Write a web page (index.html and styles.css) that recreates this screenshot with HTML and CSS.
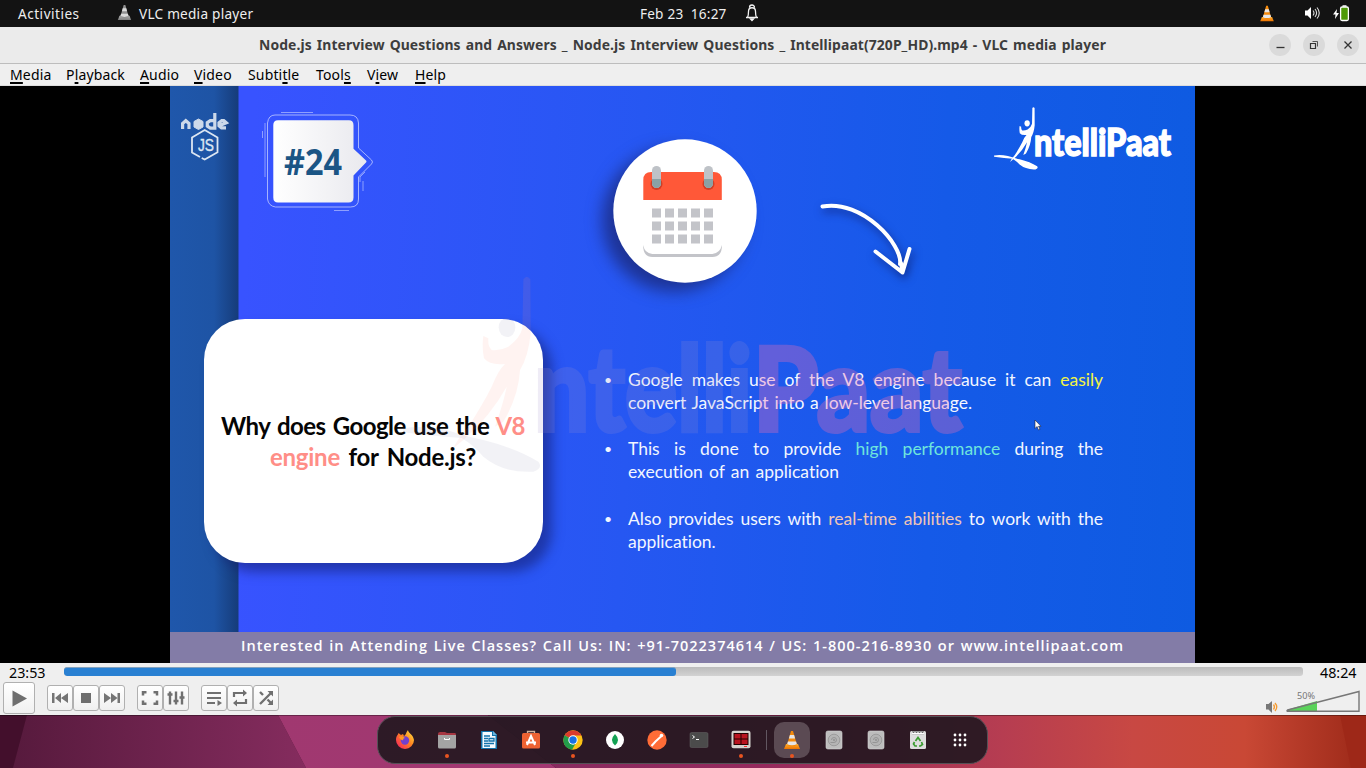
FILE: index.html
```html
<!DOCTYPE html>
<html lang="en">
<head>
<meta charset="utf-8">
<title>VLC media player</title>
<link rel="stylesheet" href="styles.css">
</head>
<body>
<svg class="defs" width="0" height="0" aria-hidden="true">
  <defs>
    <linearGradient id="orange" x2="0" y2="1"><stop stop-color="#ffb02c"/><stop offset="1" stop-color="#ed7200"/></linearGradient>
    <linearGradient id="fire" x1="1" y1="0" x2="0" y2="1"><stop stop-color="#fff044"/><stop offset=".45" stop-color="#ff8420"/><stop offset="1" stop-color="#f51767"/></linearGradient>
    <linearGradient id="paper"><stop stop-color="#fff"/><stop offset="1" stop-color="#e9e9ee"/></linearGradient>
    <symbol id="cone" viewBox="0 0 18 20">
      <path d="M3 14h12l2 5H1z" fill="url(#orange)"/>
      <path d="M8 1h2l4 14q-5 3-10 0z" fill="#f48a0b"/>
      <path d="M6.900 5h4.200l1 3.500H5.900zM4.900 11.500h8.200l.8 2.800q-5 2-9.800 0z" fill="#e6e6e6"/>
    </symbol>
    <symbol id="disk" viewBox="0 0 18 20">
      <rect x="1" y="1" width="16" height="18" rx="1.800" fill="#bdbdbd" stroke="#d6d6d6" stroke-width=".6"/>
      <circle cx="9" cy="10" r="5.800" fill="#b4b4b4" stroke="#888" stroke-width=".6"/>
      <path d="M6.500 10a2.500 2.500 0 1 1 2.500 2.500H5.500" fill="none" stroke="#888" stroke-width=".7"/><circle cx="9" cy="10" r=".8" fill="#777"/>
    </symbol>
    <symbol id="figure" viewBox="0 0 440 620" overflow="visible">
      <g transform="translate(-630)">
        <path class="man" d="M1000 28Q1010 13 1021 28L1022 190Q1015 260 990 300Q985 380 940 455L915 470Q940 400 950 350Q900 440 820 510L790 535Q800 510 835 470Q880 400 905 350Q925 300 945 282Q900 287 882 265Q875 230 880 198L895 205Q893 230 905 240Q930 243 955 230Q990 205 997 175Z"/>
        <ellipse class="pale" cx="951" cy="172" rx="25" ry="29"/>
        <path class="pale" d="M640 475Q700 465 770 480Q830 500 880 510Q980 535 1045 575Q1060 595 1030 605Q940 610 880 560Q850 525 815 504Q740 500 640 487Z"/>
      </g>
    </symbol>
  </defs>
</svg>

<header class="topbar">
  <span class="activities">Activities</span>
  <span class="app"><svg class="gray-cone" width="15" height="17"><use href="#cone"/></svg><span class="app-name">VLC media player</span></span>
  <span class="clock">Feb 23&nbsp; 16:27</span>
  <svg class="bell" width="16" height="18" viewBox="0 0 16 18" fill="none" stroke="#f2f2f2" stroke-width="1.300"><path d="M2 13.500h12M3.500 13.500c1-2 1-3 1-6 0-5 7-5 7 0 0 3 0 4 1 6M5.500 3.500a2.500 2.500 0 0 1 5 0"/><path d="M6.500 15h3L8 16.500z" fill="#fff"/></svg>
  <div class="tray">
    <svg width="16" height="17"><use href="#cone"/></svg>
    <svg class="speaker" width="17" height="16" viewBox="0 0 17 16"><path d="M1 5.500h2.500L7 2v12l-3.500-3.500H1z" fill="#fff"/><path d="M9 5.500q2 2.500 0 5M11 4q3.200 4 0 8M13 2.500q4.500 5.500 0 11" fill="none" stroke="#ddd" stroke-width="1.100"/></svg>
    <svg width="17" height="17" viewBox="0 0 17 17"><path d="M4 4L0 9.500h2.500L2 14l4-6H3.500z" fill="#fff"/><rect x="7.600" y="2" width="7.800" height="13.500" rx="1.500" fill="#4e9a06" stroke="#fff" stroke-width="1.300"/><path d="M9.500 1h4" stroke="#fff" stroke-width="1.500"/></svg>
  </div>
</header>

<div class="titlebar">
  <h1 class="window-title">Node.js Interview Questions and Answers _ Node.js Interview Questions _ Intellipaat(720P_HD).mp4 - VLC media player</h1>
  <div class="window-buttons">
    <span class="wbtn"><svg width="22" height="22"><path d="M7.500 13.500h8" stroke="#333" stroke-width="1.300"/></svg></span>
    <span class="wbtn"><svg width="22" height="22" fill="none" stroke="#333"><path d="M7.500 9.500h5v5h-5z" stroke-width="1.200"/><path d="M9.500 7.500h5v5" stroke-width=".8"/></svg></span>
    <span class="wbtn"><svg width="22" height="22"><path d="M7.500 7.500l7 7m0-7l-7 7" stroke="#333" stroke-width="1.300"/></svg></span>
  </div>
</div>

<nav class="menubar">
  <span class="m-media"><u>M</u>edia</span><span class="m-playback">P<u>l</u>ayback</span><span class="m-audio"><u>A</u>udio</span><span class="m-video"><u>V</u>ideo</span><span class="m-subtitle">Subti<u>t</u>le</span><span class="m-tools">Tool<u>s</u></span><span class="m-view">V<u>i</u>ew</span><span class="m-help"><u>H</u>elp</span>
</nav>

<main class="video">
  <div class="slide">
    <svg class="artwork" width="1025" height="546" viewBox="0 0 1025 546">
      <g fill="none" stroke="#ccd9ea" stroke-width="3.200">
        <path d="M12.600 43v-5.500l3.200-2.800 3.200 2.800V43M44.800 27v15.200h-4.500l-3-2v-3.500l3-2h4M56 41.800h-4.500l-2.500-2v-3l2.800-2.200h2l2.500 2.200-6 2.500"/>
        <path d="M28.500 33l4.500 2.500v5.500l-4.500 2.500-4.500-2.500v-5.500z" fill="#ccd9ea" stroke-width="1"/>
      </g>
      <path d="M30 71l-8-4.500V51.500l12.700-7.500 12.800 7.500v14.700l-12.800 7.300-3-1.500" fill="none" stroke="#dce6f2" stroke-width="1.800"/>
      <text x="28" y="65" font-family="Liberation Sans" font-size="17" fill="#dce6f2" stroke="#dce6f2" stroke-width=".4" textLength="16" lengthAdjust="spacingAndGlyphs">JS</text>

      <g fill="none" stroke="#c1cbff" stroke-width=".8">
        <path d="M105 29h75q8 0 8.500 8v25l13 12q2 2 0 4l-13 13v22q0 8-8 8h-75q-7-1-8-8V37q1-8 7.500-8z"/>
        <path d="M111 26.500h32M95 37v54M92.500 45v7M164 124.500h15M193 95v10M190 96v-5l5-5" opacity=".8"/>
      </g>
      <path d="M108 34.300h71q4.500 0 4.500 5v23.500L195.500 74q2 1.500 0 3l-12 12.500v22q0 5-5 5H108q-4.700 0-4.700-5V39q0-4.700 4.700-4.700z" fill="url(#paper)"/>
      <text x="114" y="89" font-family="Open Sans" font-weight="bold" font-size="35" fill="#1b5585" textLength="58" lengthAdjust="spacingAndGlyphs">#24</text>

      <g class="circle-shadow"><circle cx="515" cy="125" r="71.700" fill="#fff"/></g>
      <path d="M473.300 114V94q0-8 8-8h62.500q8 0 8 8v20z" fill="#ff5838"/>
      <path d="M473.300 159q1 8 9 9h60q8-1 9.500-9v3q-1 9-9.500 9h-60q-8 0-9-9z" fill="#c3c4c9"/>
      <g fill="#cf3f27"><circle cx="486.500" cy="98" r="6"/><circle cx="538.500" cy="98" r="6"/></g>
      <g fill="#bec2c7"><rect x="482" y="80" width="9" height="22" rx="4.500"/><rect x="534" y="80" width="9" height="22" rx="4.500"/></g>
      <path d="M482 93h9v5q-1 4-4.500 4t-4.500-4zM534 93h9v5q-1 4-4.500 4t-4.500-4z" fill="#8aa1a5"/>
      <path d="M482 127h61M482 140h61M482 153h61" stroke="#c3c4c9" stroke-width="9" stroke-dasharray="9 4"/>

      <g class="arrow" fill="none" stroke="#fff" stroke-width="4" stroke-linecap="round" stroke-linejoin="round"><path d="M652.500 120.500C692 113 733 159 730 178M705.500 165.500l27 21 7-23.500M731 177l1.500 9"/></g>

      <use class="logo-figure" href="#figure" width="46.800" height="66" x="823" y="19"/>
      <text x="864" y="70" font-family="Lato" font-weight="900" font-size="38" fill="#fff" stroke="#fff" stroke-width="1.500" textLength="137" lengthAdjust="spacingAndGlyphs">ntelliPaat</text>
    </svg>

    <div class="content">
      <section class="card">
        <p class="q1">Why does Google use the <em>V8</em></p>
        <p class="q2"><em>engine</em> for Node.js?</p>
      </section>
      <ul class="points">
        <li><p class="full">Google makes use of the V8 engine because it can <b class="yellow">easily</b></p><p class="p1b">convert JavaScript into a low-level language.</p></li>
        <li><p class="full">This is done to provide <b class="teal">high performance</b> during the</p><p class="p2b">execution of an application</p></li>
        <li><p class="full">Also provides users with <b class="peach">real-time abilities</b> to work with the</p><p class="p3b">application.</p></li>
      </ul>
    </div>

    <svg class="watermark" width="1025" height="546" viewBox="0 0 1025 546">
      <use class="wm-figure" href="#figure" x="230" y="184" width="146.700" height="206.700"/>
      <text class="wm-a" x="364" y="345" font-family="Lato" font-weight="900" font-size="119" textLength="218" lengthAdjust="spacingAndGlyphs">ntelli</text>
      <text class="wm-b" x="583" y="345" font-family="Lato" font-weight="900" font-size="116" textLength="209" lengthAdjust="spacingAndGlyphs">Paat</text>
      <path d="M865 334v8.500l2-2 1.500 3.500 1.500-.7-1.500-3h2.500z" fill="#fff" stroke="#223" stroke-width=".6"/>
    </svg>
    <footer class="ticker"><span>Interested in Attending Live Classes? Call Us: IN: +91-7022374614 / US: 1-800-216-8930 or www.intellipaat.com</span></footer>
  </div>
</main>

<section class="controls">
  <div class="seek"><span class="time">23:53</span><div class="track"><div class="played"></div></div><span class="time end">48:24</span></div>
  <div class="buttons">
    <span class="btn play"><svg width="30" height="30"><path d="M8.500 7.500v16L23 15.500z" fill="#6e6e6e"/></svg></span>
    <div class="group">
      <span class="btn"><svg width="24" height="24" fill="#757575"><path d="M4 7h2.500v10H4zM13 7v10l-6-5zM20 7v10l-7-5z"/></svg></span>
      <span class="btn"><svg width="24" height="24"><path d="M7 7h10v10H7z" fill="#6e6e6e"/></svg></span>
      <span class="btn"><svg width="24" height="24" fill="#757575"><path d="M17.500 7H20v10h-2.500zM4 7v10l7-5zM11 7v10l6.500-5z"/></svg></span>
    </div>
    <div class="group second">
      <span class="btn"><svg width="24" height="24" fill="none" stroke="#707070" stroke-width="2.500"><path d="M5 9.500V6.200h3.500M15.500 6.200H19v3.300M19 14.500v3.300h-3.500M8.500 17.800H5v-3.300"/></svg></span>
      <span class="btn"><svg width="24" height="24" fill="none" stroke="#707070" stroke-width="2.400"><path d="M6 5.500v13M12 5.500v13M18 5.500v13M3.500 8.500h5M9.500 15h5M15.500 11.500h5"/></svg></span>
    </div>
    <div class="group third">
      <span class="btn"><svg width="24" height="24" fill="none" stroke="#707070" stroke-width="2.200"><path d="M5 7h14M5 12h14M5 17h8"/><path d="M15.500 14v6l4.500-3z" fill="#707070" stroke="none"/></svg></span>
      <span class="btn"><svg width="24" height="24" fill="none" stroke="#707070" stroke-width="2.200"><path d="M6 11V7h10M18 13v4H8"/><path d="M15 3.500l4 3.500-4 3.500zM9 13.500L5 17l4 3.500z" fill="#707070" stroke="none"/></svg></span>
      <span class="btn"><svg width="24" height="24" fill="none" stroke="#707070" stroke-width="2.400"><path d="M6 6l3 3M6 18L17 7M13.500 13.500L17 17"/><path d="M13.500 5H19v5.500zM13.500 19H19v-5.500z" fill="#707070" stroke="none"/></svg></span>
    </div>
    <svg class="volume" width="100" height="30" viewBox="0 0 100 30"><path d="M2 18h2.500L8 15v12l-3.500-3.500H2z" fill="#777"/><path d="M9.500 18.500q2 2.500 0 5M11 17q3.500 4 0 8" fill="none" stroke="#f59a30" stroke-width="1.300"/><path d="M24 23.500L53 15v10H24z" fill="#59d359"/><path d="M23.500 24L95 5.500v19.800H24.500q-2.500 0-1-1.300z" fill="none" stroke="#777" stroke-width="1.400"/><text x="33" y="13" font-family="Noto Sans" font-size="9.500" fill="#777" textLength="18" lengthAdjust="spacingAndGlyphs">50%</text></svg>
  </div>
</section>

<section class="desktop">
  <svg class="wallpaper" width="1366" height="53" viewBox="0 0 1366 53">
    <defs>
      <linearGradient id="w1"><stop stop-color="#571a3d"/><stop offset="1" stop-color="#852c5e"/></linearGradient>
      <linearGradient id="w2"><stop stop-color="#a03870"/><stop offset="1" stop-color="#a33872"/></linearGradient>
      <linearGradient id="w3" gradientUnits="userSpaceOnUse" x1="500" x2="1366" y1="0" y2="0"><stop stop-color="#862b60"/><stop offset=".3" stop-color="#952a5d"/><stop offset=".58" stop-color="#b63d51"/><stop offset=".73" stop-color="#c84843"/><stop offset=".86" stop-color="#c94835"/><stop offset="1" stop-color="#9c2918"/></linearGradient>
    </defs>
    <path d="M0 0h1366v53H0z" fill="#430f2c"/>
    <path d="M27 0h251l28 53H13z" fill="url(#w1)"/>
    <path d="M278 0h210l68 53H306z" fill="url(#w2)"/>
    <path d="M488 0h878v53H556z" fill="url(#w3)"/>
    <path d="M1340 0h26v53h-15z" fill="#9e2818"/>
    <path d="M0 .5h1366" stroke="#000" stroke-opacity=".35"/>
  </svg>
  <div class="dock">
    <span class="app-icon"><svg width="20" height="20"><path d="M1 10C1 6 3 5 3.500 3L6 5l2-1 1 2c2-1 2-4 4-6 0 3 5 4 6 10a9 9 0 0 1-18 0z" fill="url(#fire)"/><circle cx="10" cy="10.500" r="4.200" fill="#7240cd"/><path d="M4 7q3-2 6 1-2 0-2 2-2 1-4-3z" fill="#ff9a22"/></svg></span>
    <span class="app-icon run"><svg width="20" height="20"><path d="M1 4q0-2 2-2h5l2 1h8q1 0 1 2v6H1z" fill="#a63642"/><path d="M1 5h18v12q0 1.500-1.500 1.500h-15Q1 18.500 1 17z" fill="#a4a4a4"/><path d="M7.500 8v1.500h5V8" fill="none" stroke="#fff"/></svg></span>
    <span class="app-icon"><svg width="20" height="20"><path d="M2 1h12l4 4v14H2z" fill="#1272aa"/><path d="M3.500 2H13v4h3.500v12h-13z" fill="#f6fbff"/><path d="M14 1v4h4z" fill="#68b4df"/><path d="M5 6h6M5 8.500h4M5 11h4M5 13.500h10M5 16h6M10 8.500h5V11h-5z" stroke="#1272aa" fill="none" stroke-width="1.300"/></svg></span>
    <span class="app-icon"><svg width="20" height="20"><path d="M6.500 4V1.500h7V4" fill="none" stroke="#d0b39e" stroke-width="1.300"/><rect x="1" y="3" width="18" height="15.500" rx="1.500" fill="#ed6232"/><path d="M6 15l4-9 4 9M5 12.500h10" fill="none" stroke="#fff" stroke-width="2"/></svg></span>
    <span class="app-icon run"><svg width="20" height="20"><circle cx="10" cy="10" r="9.700" fill="#fbc116"/><path d="M10 10L1.600 5.200A9.700 9.700 0 0 1 18.500 5.500H10z" fill="#db3b2d"/><path d="M10 10L1.600 5.200A9.700 9.700 0 0 0 9 19.700l4-7z" fill="#229c4a"/><circle cx="10" cy="10" r="4.700" fill="#fff"/><circle cx="10" cy="10" r="3.700" fill="#1970e5"/></svg></span>
    <span class="app-icon"><svg width="20" height="20"><circle cx="10" cy="10" r="9" fill="#fff"/><path d="M10 4q6 6 0 11.500Q4 10 10 4z" fill="#13a153"/></svg></span>
    <span class="app-icon"><svg width="20" height="20"><circle cx="10" cy="10" r="9.700" fill="#ff6c37"/><path d="M4.500 16l4-4.500L14 6.500" stroke="#fff" stroke-width="2" fill="none"/><circle cx="14.500" cy="5.500" r="1.800" fill="#fff"/></svg></span>
    <span class="app-icon"><svg width="20" height="20"><rect x="1" y="2.500" width="18" height="15" rx="1.500" fill="#4b4b4b" stroke="#666" stroke-width=".5"/><path d="M3.500 5.500l2 1.500-2 1.500M7 9.500h3" fill="none" stroke="#fff"/></svg></span>
    <span class="app-icon run"><svg width="20" height="20"><rect x=".5" y=".8" width="19" height="17.500" rx="2" fill="#d6d3ce"/><path d="M2.500 3h15v12h-15z" fill="#240000"/><path d="M3.500 4h6v4.500h-6zM10.500 4h6v4.500h-6zM3.500 9.500h6v4.500h-6zM10.500 9.500h6v4.500h-6z" fill="#b9141f"/><path d="M13 16.500h3" stroke="#f33"/></svg></span>
    <span class="separator"></span>
    <span class="app-icon run active"><svg width="18" height="20"><use href="#cone"/></svg></span>
    <span class="app-icon"><svg width="18" height="20"><use href="#disk"/></svg></span>
    <span class="app-icon"><svg width="18" height="20"><use href="#disk"/></svg></span>
    <span class="app-icon"><svg width="18" height="20"><rect x="1" y="1" width="16" height="18" rx="1.500" fill="#dedede"/><path d="M3 1.500h12v3H3z" fill="#4c4c4c"/><path d="M3 4.500V2l1.500 1L6 2l1.500 1L9 2l1.500 1L12 2l1.500 1L15 2v2.500z" fill="#fff"/><path d="M6.500 11L9 7.500l2.500 3.500M12.500 12l1 2.500-2 1.500H10M8 16H6l-1.500-2 1-2" fill="none" stroke="#3b9c31" stroke-width="1.700"/></svg></span>
    <span class="app-icon"><svg width="16" height="16" fill="#fff"><g id="d"><circle cx="3" cy="3" r="1.400"/><circle cx="8" cy="3" r="1.400"/><circle cx="13" cy="3" r="1.400"/></g><use href="#d" y="5"/><use href="#d" y="10"/></svg></span>
  </div>
</section>
</body>
</html>
```
FILE: styles.css
```css
* { box-sizing: border-box; }
body { margin: 0; width: 1366px; height: 768px; overflow: hidden; display: flex; flex-direction: column; background: #efefef; font-family: "Noto Sans", "Open Sans", sans-serif; font-size: 14px; white-space: nowrap; }
p, h1, ul { margin: 0; padding: 0; list-style: none; }
svg { display: block; flex: none; }
.defs { position: absolute; }

.topbar { height: 27px; background: #131313; color: #eee; display: flex; align-items: center; padding: 0 16px 1px 18px; font-size: 13.6px; }
.activities { width: 99px; letter-spacing: .5px; }
.app { display: flex; gap: 7px; width: 523px; }
.app-name { letter-spacing: .25px; }
.gray-cone { filter: grayscale(1) brightness(.95); }
.clock { width: 104px; letter-spacing: .2px; }
.tray { margin-left: auto; display: flex; align-items: center; }
.speaker { margin: 0 12px 0 29px; }

.titlebar { height: 37px; background: #ebebeb; border-bottom: 1px solid #bdbdbd; display: flex; align-items: center; padding: 0 7px 0 259px; }
.window-title { width: 847px; font-size: 13.9px; letter-spacing: .1px; color: #3d3d3d; text-align-last: justify; padding-bottom: 1px; }
.window-buttons { margin-left: auto; display: flex; gap: 12px; }
.wbtn { width: 22px; height: 22px; border-radius: 50%; background: #dadada; }

.menubar { height: 22px; display: flex; padding-left: 10px; line-height: 21px; letter-spacing: .15px; background: #efefef; border-bottom: 1px solid #ddd; color: #000; }
.menubar u { text-decoration-thickness: 1.500px; text-underline-offset: 2px; text-decoration-skip-ink: none; }
.m-media { width: 56px; }
.m-playback { width: 74px; }
.m-audio { width: 54px; }
.m-video { width: 54px; }
.m-subtitle { width: 68px; }
.m-tools { width: 51px; }
.m-view { width: 48px; }

.video { height: 577px; background: #000; display: flex; padding-left: 170px; }
.slide { position: relative; width: 1025px; height: 577px; display: flex; flex-direction: column; background: linear-gradient(90deg, #1f57ab 0, #1e54a5 44px, #163c7a 68px, transparent 69px), linear-gradient(93deg, #3853ff 8%, #2657f2 45%, #155ae8 74%, #0e5be1); overflow: hidden; }
.artwork, .watermark { position: absolute; left: 0; top: 0; }
.circle-shadow { filter: drop-shadow(-11px 9px 8px rgba(25, 35, 110, .7)); }
.arrow { filter: drop-shadow(2px 4px 4px rgba(10, 20, 90, .65)); }
.man { fill: var(--man); }
.pale { fill: var(--pale); }
.logo-figure { --man: #fff; --pale: #fff; }
.wm-figure { --man: rgba(255, 150, 130, .11); --pale: rgba(130, 130, 170, .1); }
.wm-figure, .wm-a, .wm-b { pointer-events: none; }
.wm-a { fill: #a796cd; stroke: #a796cd; stroke-width: 4px; opacity: .17; }
.wm-b { fill: #eb6eb4; stroke: #eb6eb4; stroke-width: 4px; opacity: .33; }
.content { height: 546px; display: flex; padding: 233px 0 0 34px; }
.card { width: 339px; height: 244px; background: #fff; border-radius: 41px; box-shadow: 9px 9px 12px rgba(20, 30, 110, .55); padding-top: 91px; font: bold 24px/31px Lato, sans-serif; color: #050505; position: relative; }
.card em { font-style: normal; color: #ff8e87; }
.q1 { width: 304px; margin-left: 17px; text-align-last: justify; letter-spacing: -.52px; }
.q2 { width: 206px; margin-left: 66px; text-align-last: justify; letter-spacing: -.25px; }
.points { margin: 49px 0 0 61px; font: 17.500px/23px Lato, sans-serif; color: #f2f6ff; position: relative; }
.points li { height: 69.300px; display: grid; grid-template-columns: 24px 475px; align-content: start; }
.points li::before { content: "•"; grid-row: 1 / 3; font-size: 14px; }
.points p { grid-column: 2; text-align-last: justify; letter-spacing: -.02px; }
.points b { font-weight: normal; }
.points .p1b { width: 344px; }
.points .p2b { width: 211px; }
.points .p3b { width: 91px; }
.yellow { color: #f3f344; }
.teal { color: #6fe5dc; }
.peach { color: #eec6b8; }
.ticker { height: 31px; background: #837ca7; color: #fff; font: 600 14.500px/27px "Open Sans", sans-serif; padding-left: 71px; }
.ticker span { display: block; width: 883px; letter-spacing: 1px; text-align-last: justify; }

.controls { height: 52px; background: #efefef; }
.seek { height: 19px; display: flex; padding: 0 8px 0 9px; }
.time { width: 55px; color: #000; line-height: 19px; font-size: 14.300px; }
.time.end { width: 38px; margin-left: auto; }
.track { width: 1239px; height: 9px; margin-top: 4px; border-radius: 3px; background: linear-gradient(#bcbcbc, #d2d2d2); overflow: hidden; }
.played { width: 612px; height: 9px; border-radius: 3px; background: #2980d2; border-top: 1px solid #82a2be; }
.buttons { display: flex; align-items: center; height: 32px; padding-left: 3px; }
.btn { width: 26px; height: 26px; border: 1px solid #b0b0b0; border-radius: 3px; background: linear-gradient(#fff, #f0f0f0); }
.play { width: 32px; height: 32px; margin-right: 12px; }
.group { display: flex; }
.second { margin-left: 12px; }
.third { margin-left: 12px; }
.volume { margin: 5px 2px 0 auto; }

.desktop { position: relative; height: 53px; }
.wallpaper { position: absolute; left: 0; top: 0; }
.dock { position: relative; width: 611px; height: 48px; margin: 1px 0 0 377px; padding-left: 6px; display: flex; border-radius: 18px; background: rgba(37, 24, 32, .93); border: 1px solid #555156; }
.app-icon { position: relative; width: 42px; height: 46px; display: flex; align-items: center; justify-content: center; }
.app-icon svg { position: relative; }
.run::after { content: ""; position: absolute; left: 19px; top: 37px; width: 4px; height: 4px; border-radius: 50%; background: #e95420; }
.active::before { content: ""; position: absolute; left: 3px; top: 5px; width: 36px; height: 36px; border-radius: 10px; background: #5b4a53; }
.separator { width: 1px; height: 20px; margin: 13px 4px 0; background: #625761; }
```
